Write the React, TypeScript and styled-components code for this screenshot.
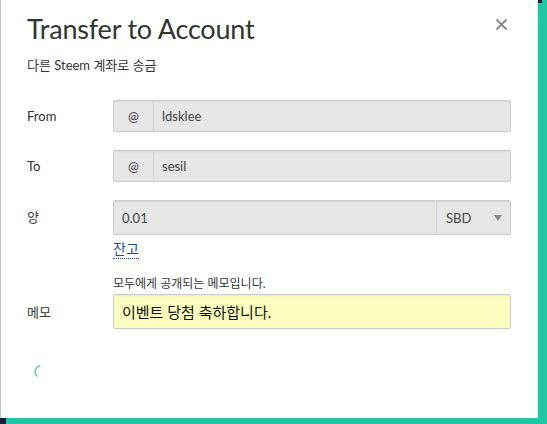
import React from "react";
import styled, { createGlobalStyle } from "styled-components";

const Global = createGlobalStyle`
  html, body { margin: 0; padding: 0; }
  body {
    width: 547px;
    height: 424px;
    overflow: hidden;
    background: #1fc7a4;
    font-family: "Lato", "Noto Sans CJK KR", sans-serif;
    color: #333;
  }
`;

const Screen = styled.div`
  position: relative;
  width: 547px;
  height: 424px;
  display: flex;
  align-items: flex-start;
`;

const Corner = styled.div`
  position: absolute;
  left: 0;
  bottom: 0;
  width: 6px;
  height: 6px;
  background: #1b1d3a;
`;

const TopNotch = styled.div`
  position: absolute;
  left: 538px;
  top: 0;
  width: 4px;
  height: 3px;
  background: #1a2a30;
`;

const Modal = styled.div`
  position: relative;
  box-sizing: border-box;
  width: 538px;
  height: 418px;
  background: #fff;
  border-left: 1px solid #b8c8d8;
  border-right: 1px solid #d8e4e4;
  padding: 12px 26px 0 26px;
`;

const Close = styled.button`
  position: absolute;
  top: 15px;
  right: 27px;
  border: none;
  background: none;
  padding: 0;
  width: 18px;
  height: 18px;
  display: flex;
  align-items: center;
  justify-content: center;
`;

const Title = styled.h1`
  margin: 0;
  font-family: "Lato", sans-serif;
  font-weight: 400;
  font-size: 27px;
  line-height: 34px;
  color: #333;
  letter-spacing: -0.2px;
`;

const Subtitle = styled.p`
  margin: 10px 0 0 0;
  font-size: 13px;
  line-height: 18px;
  color: #333;
`;

const Form = styled.div`
  margin-top: 26px;
  display: grid;
  grid-template-columns: 86px 1fr;
  row-gap: 18px;
  align-items: center;
`;

const Label = styled.div`
  font-size: 13px;
  color: #333;
`;

const InputGroup = styled.div<{ $h?: number; $bg?: string }>`
  display: flex;
  box-sizing: border-box;
  height: ${(p) => p.$h ?? 32}px;
  background: ${(p) => p.$bg ?? "#e6e6e6"};
  border: 1px solid #cacaca;
  border-radius: 2px;
  box-shadow: inset 0 1px 2px rgba(0,0,0,0.06);
`;

const Addon = styled.div`
  width: 39px;
  display: flex;
  align-items: center;
  justify-content: center;
  border-right: 1px solid #d2d2d2;
  font-size: 13px;
  color: #444;
`;

const Field = styled.div<{ $size?: number; $color?: string }>`
  flex: 1;
  display: flex;
  align-items: center;
  padding-left: 8px;
  font-size: ${(p) => p.$size ?? 13}px;
  color: ${(p) => p.$color ?? "#444"};
`;

const Select = styled.div`
  box-sizing: border-box;
  width: 74px;
  display: flex;
  align-items: center;
  justify-content: space-between;
  padding: 0 8px 0 9px;
  border-left: 1px solid #d2d2d2;
  font-size: 13px;
  color: #444;
`;

const Arrow = styled.span`
  width: 0;
  height: 0;
  border-left: 4px solid transparent;
  border-right: 4px solid transparent;
  border-top: 6px solid #888;
`;

const Stack = styled.div`
  display: flex;
  flex-direction: column;
`;

const Balance = styled.a`
  align-self: flex-start;
  margin-top: 5px;
  font-size: 14px;
  line-height: 18px;
  color: #1a5099;
  text-decoration: none;
  border-bottom: 1px dotted #1a5099;
`;

const Hint = styled.div`
  margin-bottom: 3px;
  font-size: 12px;
  line-height: 14px;
  color: #333;
`;

const TopLabel = styled(Label)`
  align-self: start;
  padding-top: 7px;
`;

const MemoLabel = styled(Label)`
  align-self: end;
  padding-bottom: 8px;
`;

const Spinner = styled.div`
  margin: 33px 0 0 4px;
  width: 12px;
  height: 14px;
`;

export default function App() {
  return (
    <>
      <Global />
      <Screen>
        <Modal>
          <Close aria-label="close">
            <svg width="13" height="13" viewBox="0 0 13 13">
              <path d="M1.5 1.5 L11.5 11.5 M11.5 1.5 L1.5 11.5" stroke="#8a8a8a" strokeWidth="2" />
            </svg>
          </Close>
          <Title>Transfer to Account</Title>
          <Subtitle>다른 Steem 계좌로 송금</Subtitle>
          <Form>
            <Label>From</Label>
            <InputGroup>
              <Addon>@</Addon>
              <Field>ldsklee</Field>
            </InputGroup>
            <Label>To</Label>
            <InputGroup>
              <Addon>@</Addon>
              <Field>sesil</Field>
            </InputGroup>
            <TopLabel>양</TopLabel>
            <Stack>
              <InputGroup $h={35}>
                <Field>0.01</Field>
                <Select>
                  SBD
                  <Arrow />
                </Select>
              </InputGroup>
              <Balance>잔고</Balance>
            </Stack>
            <MemoLabel>메모</MemoLabel>
            <Stack>
              <Hint>모두에게 공개되는 메모입니다.</Hint>
              <InputGroup $h={35} $bg="#fafdbd">
                <Field $size={15} $color="#111">이벤트 당첨 축하합니다.</Field>
              </InputGroup>
            </Stack>
          </Form>
          <Spinner>
            <svg width="12" height="14" viewBox="0 0 12 14">
              <path d="M9 1.8 A6 6 0 0 0 6.5 12.5" fill="none" stroke="#5ccfb5" strokeWidth="1.5" />
            </svg>
          </Spinner>
        </Modal>
        <TopNotch />
        <Corner />
      </Screen>
    </>
  );
}
